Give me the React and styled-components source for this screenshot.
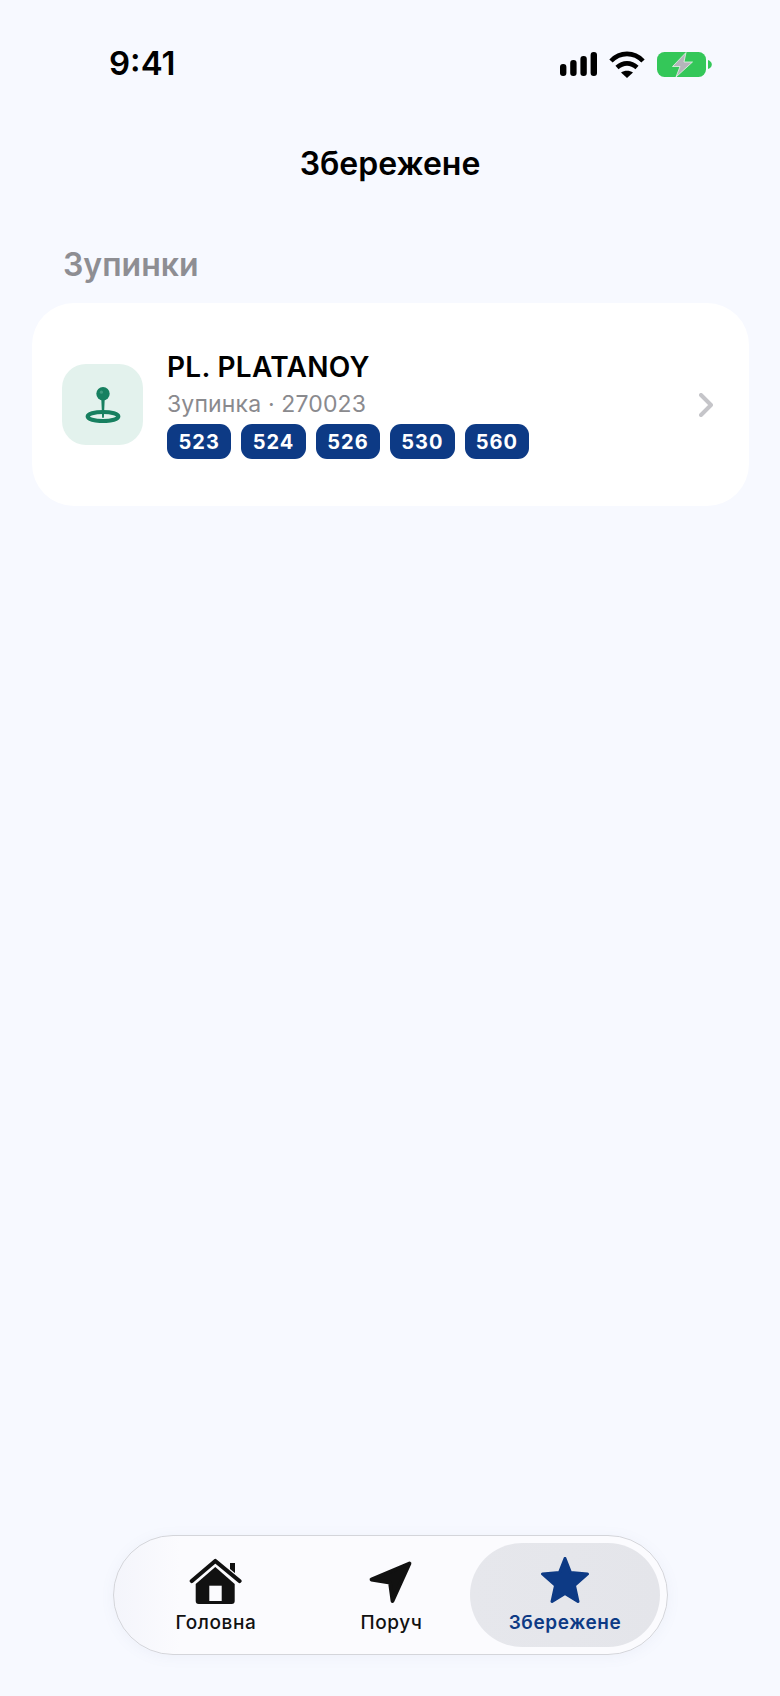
import React from 'react';
import styled, { createGlobalStyle } from 'styled-components';

const Global = createGlobalStyle`
  html, body { margin: 0; padding: 0; background: #f7f9ff; }
  * { box-sizing: border-box; }
`;

const Page = styled.div`
  width: 780px;
  height: 1696px;
  display: flex;
  flex-direction: column;
  background: #f7f9ff;
  font-family: Inter, "Liberation Sans", sans-serif;
  overflow: hidden;
`;

const StatusBar = styled.div`
  height: 126px;
  padding: 43px 68px 0 109px;
  display: flex;
  justify-content: space-between;
  align-items: flex-start;
`;

const Time = styled.span`
  font-size: 33px;
  line-height: 40px;
  font-weight: 600;
  color: #000;
`;

const StatusIcons = styled.div`
  display: flex;
  align-items: center;
  gap: 12px;
  height: 42px;
`;

const Title = styled.h1`
  margin: 0;
  height: 76px;
  padding-top: 18px;
  font-size: 32px;
  line-height: 40px;
  font-weight: 600;
  color: #000;
  text-align: center;
`;

const SectionLabel = styled.h2`
  margin: 0;
  padding: 43px 0 0 63px;
  height: 101px;
  font-size: 32px;
  line-height: 40px;
  font-weight: 600;
  color: #8e8e93;
`;

const Card = styled.div`
  margin-left: 32px;
  width: 717px;
  height: 203px;
  border-radius: 42px;
  background: #fff;
  display: flex;
  align-items: center;
  padding: 0 36px 0 30px;
`;

const IconBox = styled.div`
  width: 81px;
  height: 81px;
  border-radius: 24px;
  background: #e3f2ed;
  display: flex;
  align-items: center;
  justify-content: center;
  flex-shrink: 0;
`;

const Info = styled.div`
  flex: 1;
  margin-left: 24px;
  display: flex;
  flex-direction: column;
`;

const StopName = styled.div`
  font-size: 28px;
  line-height: 34px;
  font-weight: 600;
  letter-spacing: 0.3px;
  color: #000;
`;

const StopMeta = styled.div`
  margin-top: 6px;
  font-size: 23px;
  line-height: 28px;
  letter-spacing: 0.15px;
  color: #8a8a8e;
`;

const Chips = styled.div`
  margin-top: 6px;
  display: flex;
  gap: 10px;
`;

const Chip = styled.span`
  width: 64.4px;
  height: 35px;
  border-radius: 11px;
  background: #0d3a85;
  color: #fff;
  font-size: 20px;
  font-weight: 700;
  letter-spacing: 1px;
  display: flex;
  align-items: center;
  justify-content: center;
`;

const Spacer = styled.div`
  flex: 1;
`;

const TabBar = styled.nav`
  align-self: flex-start;
  margin: 0 0 41px 113px;
  width: 555px;
  height: 120px;
  border-radius: 60px;
  border: 1px solid #d4d5da;
  background: linear-gradient(90deg, #f4f5fb 0%, #fbfbfe 12%, #fbfbfe 100%);
  box-shadow: 0 2px 14px rgba(120, 130, 170, 0.07);
  display: grid;
  grid-template-columns: 194px 157px 190px;
  align-items: stretch;
  padding: 7px 7px 7px 5px;
`;

const Tab = styled.div`
  border-radius: 52px;
  background: ${p => (p.$active ? 'linear-gradient(90deg, #e6e7ec, #e4e5ea)' : 'transparent')};
  color: ${p => (p.$active ? '#0d3a85' : '#111')};
  display: flex;
  flex-direction: column;
  align-items: center;
  padding-top: 14px;
  font-size: 19px;
  font-weight: ${p => (p.$active ? 600 : 500)};
  letter-spacing: 0.6px;
`;

const TabIcon = styled.svg`
  display: block;
  width: 54px;
  height: 50px;
  flex-shrink: 0;
`;

const TabLabel = styled.span`
  margin-top: 4px;
  line-height: 24px;
`;

const Routes = ['523', '524', '526', '530', '560'];

function Signal() {
  return (
    <svg width="37" height="24" viewBox="0 0 37 24">
      <rect x="0" y="12" width="6.4" height="12" rx="3" fill="#000" />
      <rect x="10.2" y="8" width="6.4" height="16" rx="3" fill="#000" />
      <rect x="20.4" y="4" width="6.4" height="20" rx="3" fill="#000" />
      <rect x="30.6" y="0" width="6.4" height="24" rx="3" fill="#000" />
    </svg>
  );
}

function Wifi() {
  return (
    <svg width="36" height="27" viewBox="0 0 36 27" fill="none" stroke="#000" strokeWidth="4.6">
      <path d="M2 10 C11 0.5 25 0.5 34 10" />
      <path d="M8 16.5 C14 11 22 11 28 16.5" />
      <path d="M18 27 L12 21.5 C15.5 19 20.5 19 24 21.5 Z" fill="#000" stroke="none" />
    </svg>
  );
}

function Battery() {
  return (
    <svg width="55" height="25" viewBox="0 0 55 25">
      <rect x="0" y="0" width="49" height="25" rx="7.5" fill="#34c759" />
      <path d="M51 8 C53.5 9 54.8 10.5 54.8 12.5 C54.8 14.5 53.5 16 51 17 Z" fill="#34c759" />
      <path d="M29 0.5 L15.5 14.5 H23 L19 25 L35.5 10 H27 Z" fill="#b4b5bb" stroke="#e6f5ea" strokeWidth="0.8" />
    </svg>
  );
}

function Pin() {
  return (
    <svg width="36" height="36" viewBox="0 0 36 36" fill="none">
      <ellipse cx="18" cy="29.5" rx="15.4" ry="4.6" stroke="#178060" strokeWidth="4" />
      <path d="M16.2 10 H19.8 L18.9 30 a0.9 0.9 0 0 1 -1.8 0 Z" fill="#178060" />
      <circle cx="18" cy="6.7" r="6.7" fill="#178060" />
      <circle cx="16.4" cy="5.2" r="1.6" fill="#3f9a7e" />
    </svg>
  );
}

function Chevron() {
  return (
    <svg width="14" height="24" viewBox="0 0 14 24" fill="none">
      <path d="M2 2 L12 12 L2 22" stroke="#c5c5c9" strokeWidth="4" strokeLinecap="round" strokeLinejoin="round" />
    </svg>
  );
}

function App() {
  return (
    <Page>
      <Global />
      <StatusBar>
        <Time>9:41</Time>
        <StatusIcons>
          <Signal />
          <Wifi />
          <Battery />
        </StatusIcons>
      </StatusBar>
      <Title>Збережене</Title>
      <SectionLabel>Зупинки</SectionLabel>
      <Card>
        <IconBox>
          <Pin />
        </IconBox>
        <Info>
          <StopName>PL. PLATANOY</StopName>
          <StopMeta>Зупинка · 270023</StopMeta>
          <Chips>
            {Routes.map(r => (
              <Chip key={r}>{r}</Chip>
            ))}
          </Chips>
        </Info>
        <Chevron />
      </Card>
      <Spacer />
      <TabBar>
        <Tab>
          <TabIcon viewBox="0 0 54 50">
            <path d="M6.7 44 V27 L26.3 10 L45.7 27 V44 a3 3 0 0 1 -3 3 H9.7 a3 3 0 0 1 -3 -3 Z" fill="#111" />
            <rect x="41" y="6" width="5" height="12" fill="#111" />
            <rect x="20.3" y="28.7" width="12.4" height="15.3" fill="#fbfbfe" />
            <path d="M2.8 24 L26.3 4 L50.5 24" fill="none" stroke="#fbfbfe" strokeWidth="6.4" />
            <path d="M2.8 24 L26.3 4 L50.5 24" fill="none" stroke="#111" strokeWidth="4.2" strokeLinecap="round" strokeLinejoin="round" />
          </TabIcon>
          <TabLabel>Головна</TabLabel>
        </Tab>
        <Tab>
          <TabIcon viewBox="0 0 54 50">
            <path d="M44.5 6.5 L6.5 22.5 L25 25.5 L27.5 44 Z" fill="#111" stroke="#111" strokeWidth="3.8" strokeLinejoin="round" />
          </TabIcon>
          <TabLabel>Поруч</TabLabel>
        </Tab>
        <Tab $active>
          <TabIcon viewBox="0 0 54 50">
            <path d="M27 1.5 L32.5 15.5 L49.5 17 L36.5 28.5 L40 44.5 L27 36.5 L14 44.5 L17.5 28.5 L4.5 17 L21.5 15.5 Z" fill="#0d3a85" stroke="#0d3a85" strokeWidth="3" strokeLinejoin="round" />
          </TabIcon>
          <TabLabel>Збережене</TabLabel>
        </Tab>
      </TabBar>
    </Page>
  );
}

export default App;
